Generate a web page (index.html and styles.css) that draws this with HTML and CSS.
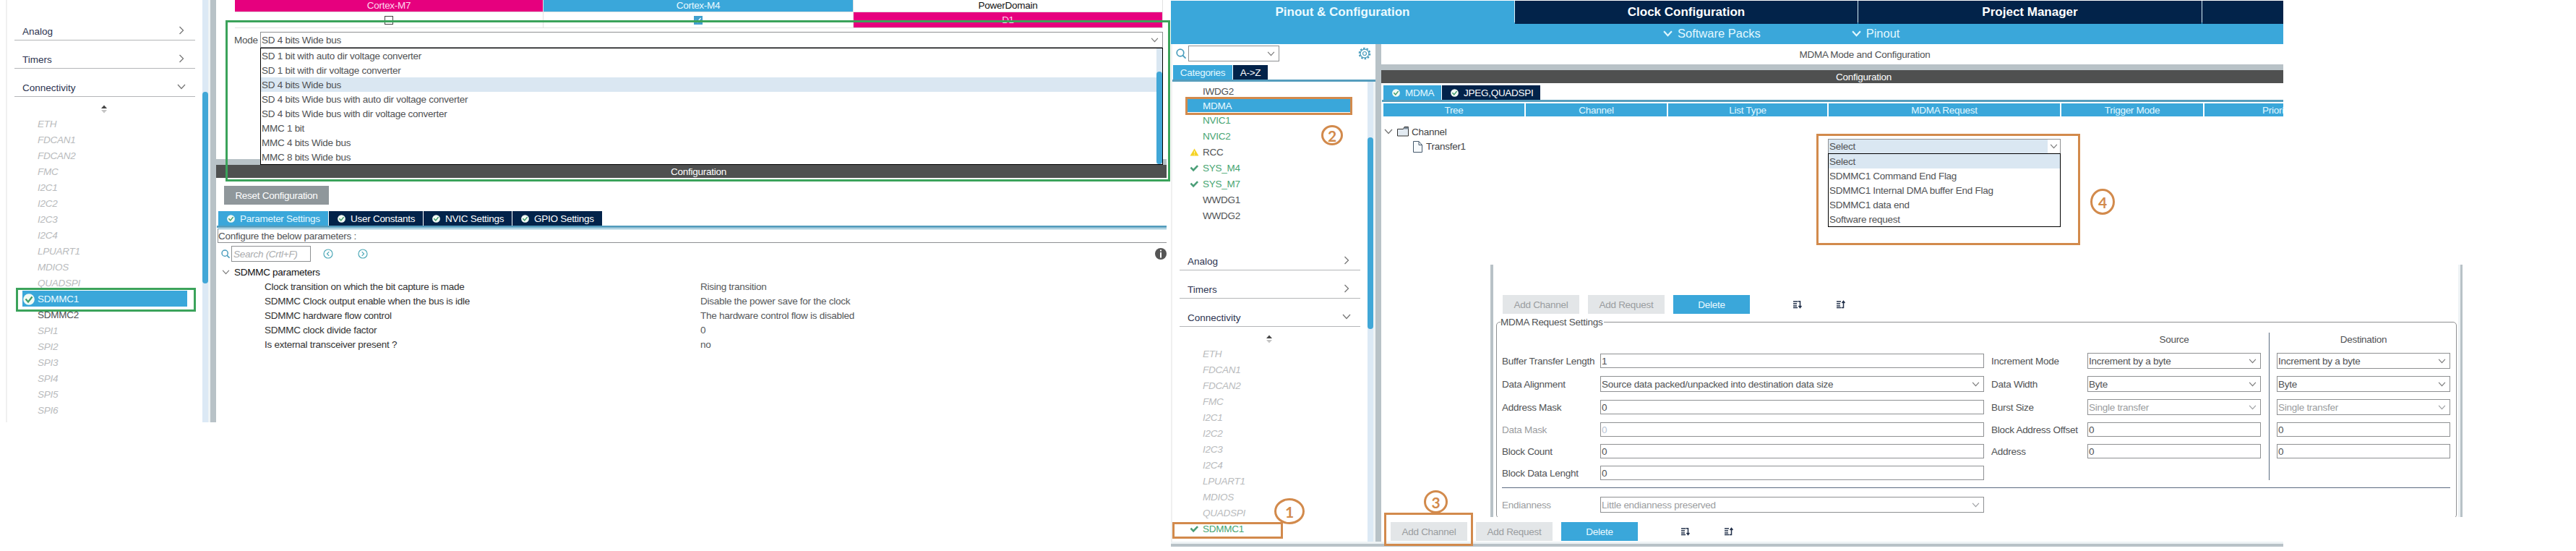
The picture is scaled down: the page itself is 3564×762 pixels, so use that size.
FILE: index.html
```html
<!DOCTYPE html>
<html lang="en">
<head>
  <meta charset="UTF-8" />
  <meta name="viewport" content="width=device-width, initial-scale=1.0"/>
  <title>SDMMC1 and MDMA configuration</title>
  <link rel="stylesheet" href="styles.css">
</head>
<body>
  <!-- shared icons -->
  <svg class="sprite">
    <symbol id="down" viewBox="0 0 12 8"><path d="M1 1l5 5.5L11 1" fill="none" stroke="currentColor" stroke-width="1.3"/></symbol>
    <symbol id="down-bold" viewBox="0 0 12 8"><path d="M1 1l5 5.5L11 1" fill="none" stroke="currentColor" stroke-width="2"/></symbol>
    <symbol id="right" viewBox="0 0 8 12"><path d="M1.5 1L6.500 6 1.500 11" fill="none" stroke="currentColor" stroke-width="1.3"/></symbol>
    <symbol id="sort" viewBox="0 0 8 12"><path d="M0 5l4-4.500L8 5z" fill="#444"/><path d="M0 7l4 4.500L8 7z" fill="#c4c4c4"/></symbol>
    <symbol id="ok" viewBox="0 0 16 16"><circle cx="8" cy="8" r="7.800" fill="#f1faf3"/><path d="M3.500 7.500L7 11.500l5.500-7" fill="none" stroke="#3f9c6b" stroke-width="2.200"/></symbol>
    <symbol id="tick" viewBox="0 0 14 12"><path d="M1.500 5L5.500 9.200l6.500-7" fill="none" stroke="#4a9e77" stroke-width="2.800"/></symbol>
    <symbol id="tick-thin" viewBox="0 0 8 8"><path d="M.5 4l2.500 2.500L7.500 1" fill="none" stroke="#fff" stroke-width="1.300"/></symbol>
    <symbol id="warn" viewBox="0 0 14 12"><path d="M7 .5L13.500 11.500H.5z" fill="#f5d327"/><path d="M7 4v4M7 9v1.400" stroke="#fff3b0" stroke-width="1.200"/></symbol>
    <symbol id="search" viewBox="0 0 14 14"><circle cx="6" cy="6" r="4.800" fill="none" stroke="#4a9dbd" stroke-width="1.700"/><path d="M9.300 9.500l4.200 4.200" stroke="#4a9dbd" stroke-width="1.800"/></symbol>
    <symbol id="gear" viewBox="0 0 18 18"><circle cx="9" cy="9" r="7.300" fill="none" stroke="#4a9dbd" stroke-width="2" stroke-dasharray="2.600 2"/><circle cx="9" cy="9" r="5.900" fill="none" stroke="#4a9dbd" stroke-width="1.200"/><circle cx="9" cy="9" r="2.500" fill="none" stroke="#4a9dbd" stroke-width="1.200"/></symbol>
    <symbol id="prev" viewBox="0 0 14 14"><circle cx="7" cy="7" r="6" fill="none" stroke="#4fa9b8" stroke-width="1.200"/><path d="M8.300 4.200L5.500 7l2.800 2.800" fill="none" stroke="#4fa9b8" stroke-width="1.200"/></symbol>
    <symbol id="next" viewBox="0 0 14 14"><circle cx="7" cy="7" r="6" fill="none" stroke="#4fa9b8" stroke-width="1.200"/><path d="M5.700 4.200L8.500 7 5.700 9.800" fill="none" stroke="#4fa9b8" stroke-width="1.200"/></symbol>
    <symbol id="info" viewBox="0 0 16 16"><circle cx="8" cy="8" r="8" fill="#555"/><path d="M8 2.500v2M8 6v7.500" stroke="#fff" stroke-width="2"/></symbol>
    <symbol id="folder" viewBox="0 0 16 14"><path d="M.5 3.500h8l1.500-3h5.500v12.500H.5z" fill="#e3ebf2" stroke="#333" /><path d="M9 3.500L10.500 1h5v2.500z" fill="#7d8b99"/></symbol>
    <symbol id="file" viewBox="0 0 13 16"><path d="M.5.5h7.500l4.500 5v10H.5z" fill="#f7fafc" stroke="#44586c"/><path d="M8 .5v5h4.500" fill="none" stroke="#44586c"/></symbol>
    <symbol id="movedown" viewBox="0 0 12 12"><path d="M0 2h6M0 5h5M0 8h5M0 10.500h6" stroke="#22304a" stroke-width="1.300"/><path d="M6.500 1.700h3V10M7.500 8l2 2.500 2-2.500" fill="none" stroke="#22304a" stroke-width="1.500"/></symbol>
    <symbol id="moveup" viewBox="0 0 12 12"><path d="M0 2h6M0 5h5M0 8h5M0 10.500h6" stroke="#22304a" stroke-width="1.300"/><path d="M6.500 10.500h3V2M7.500 4l2-2.500 2 2.500" fill="none" stroke="#22304a" stroke-width="1.500"/></symbol>
  </svg>

  <!-- SDMMC1 settings -->
  <div class="shot shot-sdmmc">
    <div class="nav">
      <div class="scroll">
        <div class="tree">
          <div class="group first">Analog<svg class="ic-right"><use href="#right"/></svg></div>
          <div class="group">Timers<svg class="ic-right"><use href="#right"/></svg></div>
          <div class="group">Connectivity<svg class="ic-down"><use href="#down"/></svg></div>
          <div class="sort"><svg><use href="#sort"/></svg></div>
          <div class="item off">ETH</div>
          <div class="item off">FDCAN1</div>
          <div class="item off">FDCAN2</div>
          <div class="item off">FMC</div>
          <div class="item off">I2C1</div>
          <div class="item off">I2C2</div>
          <div class="item off">I2C3</div>
          <div class="item off">I2C4</div>
          <div class="item off">LPUART1</div>
          <div class="item off">MDIOS</div>
          <div class="item off">QUADSPI</div>
          <div class="item selected"><svg class="ic-ok"><use href="#ok"/></svg>SDMMC1</div>
          <div class="item">SDMMC2</div>
          <div class="item off">SPI1</div>
          <div class="item off">SPI2</div>
          <div class="item off">SPI3</div>
          <div class="item off">SPI4</div>
          <div class="item off">SPI5</div>
          <div class="item off">SPI6</div>
        </div>
        <div class="track"><div class="thumb"></div></div>
      </div>
    </div>
    <div class="split"></div>
    <div class="main">
      <div class="mode-area">
        <div class="cores">
          <div class="pink">Cortex-M7</div>
          <div class="blue">Cortex-M4</div>
          <div class="domain">PowerDomain</div>
          <div><span class="check"></span></div>
          <div><span class="check on"><svg><use href="#tick-thin"/></svg></span></div>
          <div class="pink">D1</div>
        </div>
        <div class="mode">
          <label>Mode</label>
          <div class="combo">SD 4 bits Wide bus<svg><use href="#down"/></svg>
            <div class="menu">
              <div>SD 1 bit with auto dir voltage converter</div>
              <div>SD 1 bit with dir voltage converter</div>
              <div class="hover">SD 4 bits Wide bus</div>
              <div>SD 4 bits Wide bus with auto dir voltage converter</div>
              <div>SD 4 bits Wide bus with dir voltage converter</div>
              <div>MMC 1 bit</div>
              <div>MMC 4 bits Wide bus</div>
              <div>MMC 8 bits Wide bus</div>
              <div class="menu-track"><div class="menu-thumb"></div></div>
            </div>
          </div>
        </div>
      </div>
      <div class="divider"></div>
      <div class="title-bar">Configuration</div>
      <button class="reset">Reset Configuration</button>
      <div class="tabs">
        <div class="tab active param"><svg><use href="#ok"/></svg>Parameter Settings</div>
        <div class="tab user"><svg><use href="#ok"/></svg>User Constants</div>
        <div class="tab nvic"><svg><use href="#ok"/></svg>NVIC Settings</div>
        <div class="tab gpio"><svg><use href="#ok"/></svg>GPIO Settings</div>
      </div>
      <div class="hint">Configure the below parameters :</div>
      <div class="find">
        <svg class="ic-search"><use href="#search"/></svg>
        <div class="field">Search (Crtl+F)</div>
        <svg class="ic-round"><use href="#prev"/></svg>
        <svg class="ic-round"><use href="#next"/></svg>
        <svg class="ic-info"><use href="#info"/></svg>
      </div>
      <div class="params">
        <div class="params-title"><svg><use href="#down"/></svg>SDMMC parameters</div>
        <div class="param-row"><span>Clock transition on which the bit capture is made</span><span>Rising transition</span></div>
        <div class="param-row"><span>SDMMC Clock output enable when the bus is idle</span><span>Disable the power save for the clock</span></div>
        <div class="param-row"><span>SDMMC hardware flow control</span><span>The hardware control flow is disabled</span></div>
        <div class="param-row"><span>SDMMC clock divide factor</span><span>0</span></div>
        <div class="param-row"><span>Is external transceiver present ?</span><span>no</span></div>
      </div>
    </div>
    <div class="mark green mark-mode"></div>
    <div class="mark green mark-item"></div>
  </div>

  <!-- MDMA settings -->
  <div class="shot shot-mdma">
    <div class="top-tabs">
      <div class="active">Pinout &amp; Configuration</div>
      <div>Clock Configuration</div>
      <div>Project Manager</div>
      <div></div>
    </div>
    <div class="sub-bar">
      <span><svg><use href="#down-bold"/></svg>Software Packs</span>
      <span><svg><use href="#down-bold"/></svg>Pinout</span>
    </div>
    <div class="work">
      <div class="nav">
        <div class="nav-tools">
          <svg class="ic-search"><use href="#search"/></svg>
          <div class="combo"><svg><use href="#down"/></svg></div>
          <svg class="ic-gear"><use href="#gear"/></svg>
        </div>
        <div class="tabs">
          <div class="tab active cat">Categories</div>
          <div class="tab az">A-&gt;Z</div>
        </div>
        <div class="scroll">
          <div class="tree">
            <div class="item short">IWDG2</div>
            <div class="item short selected">MDMA</div>
            <div class="item green-text">NVIC1</div>
            <div class="item green-text">NVIC2</div>
            <div class="item"><svg class="ic-tick"><use href="#warn"/></svg>RCC</div>
            <div class="item green-text"><svg class="ic-tick"><use href="#tick"/></svg>SYS_M4</div>
            <div class="item green-text"><svg class="ic-tick"><use href="#tick"/></svg>SYS_M7</div>
            <div class="item">WWDG1</div>
            <div class="item">WWDG2</div>
            <div class="group first">Analog<svg class="ic-right"><use href="#right"/></svg></div>
            <div class="group">Timers<svg class="ic-right"><use href="#right"/></svg></div>
            <div class="group">Connectivity<svg class="ic-down"><use href="#down"/></svg></div>
            <div class="sort"><svg><use href="#sort"/></svg></div>
            <div class="item off">ETH</div>
            <div class="item off">FDCAN1</div>
            <div class="item off">FDCAN2</div>
            <div class="item off">FMC</div>
            <div class="item off">I2C1</div>
            <div class="item off">I2C2</div>
            <div class="item off">I2C3</div>
            <div class="item off">I2C4</div>
            <div class="item off">LPUART1</div>
            <div class="item off">MDIOS</div>
            <div class="item off">QUADSPI</div>
            <div class="item green-text"><svg class="ic-tick"><use href="#tick"/></svg>SDMMC1</div>
            <div class="item">SDMMC2</div>
          </div>
          <div class="track"><div class="thumb"></div></div>
        </div>
      </div>
      <div class="split"></div>
      <div class="main">
        <div class="page-title">MDMA Mode and Configuration</div>
        <div class="divider"></div>
        <div class="title-bar">Configuration</div>
        <div class="tabs">
          <div class="tab active mdma"><svg><use href="#ok"/></svg>MDMA</div>
          <div class="tab jpeg"><svg><use href="#ok"/></svg>JPEG,QUADSPI</div>
        </div>
        <div class="cols head">
          <div>Tree</div>
          <div>Channel</div>
          <div>List Type</div>
          <div>MDMA Request</div>
          <div>Trigger Mode</div>
          <div>Priority</div>
        </div>
        <div class="requests">
          <div class="channel"><svg class="ic-down"><use href="#down"/></svg><svg class="ic-folder"><use href="#folder"/></svg>Channel</div>
          <div class="cols">
            <div class="transfer"><svg><use href="#file"/></svg>Transfer1</div>
            <div class="combo request">Select<span class="arrow"><svg><use href="#down"/></svg></span>
              <div class="menu">
                <div class="hover">Select</div>
                <div>SDMMC1 Command End Flag</div>
                <div>SDMMC1 Internal DMA buffer End Flag</div>
                <div>SDMMC1 data end</div>
                <div>Software request</div>
              </div>
            </div>
          </div>
        </div>
        <div class="actions">
          <button class="disabled">Add Channel</button>
          <button class="disabled">Add Request</button>
          <button>Delete</button>
          <svg><use href="#movedown"/></svg>
          <svg><use href="#moveup"/></svg>
        </div>
      </div>
    </div>
    <div class="status"></div>
    <div class="mark orange mark-mdma"></div>
    <div class="mark orange mark-sdmmc"></div>
    <div class="mark orange mark-add"></div>
    <div class="mark orange mark-request"></div>
    <div class="step step1">1</div>
    <div class="step step2">2</div>
    <div class="step step3">3</div>
    <div class="step step4">4</div>
  </div>

  <!-- request settings, laid over the MDMA window -->
  <div class="settings">
    <div class="actions">
      <button class="disabled">Add Channel</button>
      <button class="disabled">Add Request</button>
      <button>Delete</button>
      <svg><use href="#movedown"/></svg>
      <svg><use href="#moveup"/></svg>
    </div>
    <fieldset>
      <legend>MDMA Request Settings</legend>
      <div class="form">
        <div class="vline"></div>
        <div class="src">Source</div>
        <div class="dst dst-title">Destination</div>

        <label>Buffer Transfer Length</label>
        <div class="input">1</div>
        <label class="second">Increment Mode</label>
        <div class="combo">Increment by a byte<svg><use href="#down"/></svg></div>
        <div class="combo dst">Increment by a byte<svg><use href="#down"/></svg></div>

        <label>Data Alignment</label>
        <div class="combo">Source data packed/unpacked into destination data size<svg><use href="#down"/></svg></div>
        <label class="second">Data Width</label>
        <div class="combo">Byte<svg><use href="#down"/></svg></div>
        <div class="combo dst">Byte<svg><use href="#down"/></svg></div>

        <label>Address Mask</label>
        <div class="input">0</div>
        <label class="second">Burst Size</label>
        <div class="combo gray">Single transfer<svg><use href="#down"/></svg></div>
        <div class="combo gray dst">Single transfer<svg><use href="#down"/></svg></div>

        <label class="gray">Data Mask</label>
        <div class="input faint">0</div>
        <label class="second">Block Address Offset</label>
        <div class="input">0</div>
        <div class="input dst">0</div>

        <label>Block Count</label>
        <div class="input">0</div>
        <label class="second">Address</label>
        <div class="input">0</div>
        <div class="input dst">0</div>

        <label>Block Data Lenght</label>
        <div class="input">0</div>
      </div>
      <div class="form last">
        <label class="gray">Endianness</label>
        <div class="combo gray">Little endianness preserved<svg><use href="#down"/></svg></div>
      </div>
    </fieldset>
  </div>
</body>
</html>
```
FILE: styles.css
```css
* {
  box-sizing: border-box;
}
body {
  position: relative;
  display: flex;
  align-items: flex-start;
  gap: 6px;
  width: 3564px;
  height: 762px;
  margin: 0;
  padding-left: 8px;
  overflow: hidden;
  background: #fff;
  color: #505254;
  font-family: "Liberation Sans", Arial, sans-serif;
  font-size: 13.5px;
  letter-spacing: -0.27px;
  line-height: 21px;
  white-space: nowrap;
}
svg {
  display: block;
  flex: none;
}
.sprite {
  position: absolute;
  width: 0;
  height: 0;
}
.shot {
  position: relative;
}
.shot-sdmmc {
  z-index: 1;
  display: flex;
  width: 1606px;
  height: 584px;
}
.shot-mdma {
  width: 1539px;
  height: 756px;
  padding-top: 1px;
  overflow: hidden;
}

/* left navigation */
.nav {
  display: flex;
  flex-direction: column;
  width: 283px;
  border-left: 2px solid #f0f0f0;
}
.shot-sdmmc .nav {
  height: 584px;
}
.scroll {
  display: flex;
  flex: 1;
  min-height: 0;
  padding-right: 3px;
  background: #eef3f5;
}
.tree {
  width: 270px;
  overflow: hidden;
  background: #fff;
}
.track {
  width: 8px;
  background: #dce9f5;
}
.thumb {
  height: 265px;
  margin-top: 127px;
  border-radius: 4px;
  background: #41a7d7;
}
.shot-mdma .thumb {
  margin-top: 77px;
}
.split {
  width: 8px;
  background: #b8c2c7;
}
.group {
  display: flex;
  align-items: center;
  justify-content: space-between;
  width: 250px;
  height: 39px;
  margin-left: 10px;
  padding: 15px 13px 0 11px;
  border-bottom: 1px solid #b4b6b8;
  color: #2c3350;
  letter-spacing: 0;
}
.group.first {
  margin-top: 17px;
}
.shot-mdma .group.first {
  margin-top: 26px;
}
.group svg {
  margin-bottom: 4px;
  color: #777;
}
.ic-right {
  width: 8px;
  height: 12px;
  margin-right: 2px;
}
.ic-down {
  width: 12px;
  height: 8px;
}
.sort {
  height: 26px;
  padding: 11px 0 0 130px;
}
.sort svg {
  width: 8px;
  height: 12px;
}
.item {
  display: flex;
  align-items: center;
  height: 22px;
  padding: 1px 0 0 42px;
}
.item.short {
  height: 20px;
}
.item.off {
  color: #b9bbbd;
  font-style: italic;
}
.item.selected {
  width: 228px;
  margin-left: 21px;
  padding-left: 21px;
  background: #3aa7da;
  color: #eafaff;
}
.item.short.selected {
  height: 19px;
  width: 225px;
}
.green-text {
  color: #48a572;
}
.ic-ok {
  width: 16px;
  height: 16px;
  margin: 0 4px 0 -20px;
}
.ic-tick {
  width: 13px;
  height: 11px;
  margin: 0 5px 0 -18px;
}

/* common pieces */
.main {
  flex: 1;
  min-width: 0;
  overflow: hidden;
}
.divider {
  height: 8px;
  background: #b8c2c7;
}
.title-bar {
  height: 18px;
  background: #4f5050;
  color: #fff;
  line-height: 19px;
  text-align: center;
}
.tabs {
  display: flex;
  gap: 1px;
  height: 23px;
  border-bottom: 3px solid #559dbd;
}
.tab {
  display: flex;
  align-items: center;
  height: 20px;
  padding-left: 12px;
  background: #02234a;
  color: #fff;
}
.tab.active {
  background: #3aa7da;
  color: #e2f8ff;
}
.tab svg {
  width: 11px;
  height: 11px;
  margin-right: 7px;
}
.combo,
.input {
  position: relative;
  display: flex;
  align-items: center;
  justify-content: space-between;
  height: 22px;
  padding: 0 5px 0 1px;
  border: 1px solid #8e9092;
  background: #fff;
}
.input {
  height: 20px;
}
.combo svg {
  width: 11px;
  height: 7px;
  color: #777;
}
.menu {
  position: absolute;
  top: 21px;
  left: -1px;
  right: -1px;
  border: 1px solid #000;
  background: #fff;
}
.menu > div {
  height: 20px;
  padding-left: 1px;
}
.menu .hover {
  background: #dae7f2;
}
.menu > .menu-track {
  position: absolute;
  top: 0;
  right: 0;
  bottom: 0;
  width: 8px;
  height: auto;
  padding: 32px 0 0;
  background: #dae7f2;
}
.menu-thumb {
  height: 128px;
  border-radius: 4px;
  background: #41a7d7;
}
button {
  height: 26px;
  padding: 0;
  border: none;
  background: #3aa7da;
  color: #eafaff;
  font: inherit;
  letter-spacing: inherit;
}
.disabled {
  background: #e3e6e8;
  color: #9a9da0;
}

/* SDMMC window */
.mode-area {
  height: 220px;
  padding: 0 5px 0 26px;
}
.cores {
  display: grid;
  grid-template-columns: 426px 428px 427px;
  grid-template-rows: 16px 21px;
  gap: 1px;
  width: 1284px;
  border: solid #e2e2e2;
  border-width: 0 1px 1px 0;
  background: #e2e2e2;
  text-align: center;
  line-height: 16px;
}
.cores > div {
  display: flex;
  align-items: center;
  justify-content: center;
  background: #fff;
}
.cores > .pink {
  background: #e6007e;
  color: #ffd9ee;
}
.cores > .blue {
  background: #3aa7da;
  color: #eafaff;
}
.cores > .domain {
  color: #111;
}
.check {
  width: 12px;
  height: 12px;
  border: 1px solid #444;
}
.check.on {
  border: none;
  background: #41a0cd;
}
.check svg {
  width: 8px;
  height: 8px;
  margin: 2px;
}
.mode {
  display: flex;
  align-items: center;
  margin: 5px 0 0 -1px;
}
.mode label {
  width: 36px;
}
.mode .combo {
  width: 1249px;
}
.shot-sdmmc .title-bar {
  padding-left: 20px;
}
.reset {
  display: block;
  width: 145px;
  margin: 11px 0 9px 11px;
  background: #8f979b;
  color: #fff;
}
.shot-sdmmc .tabs {
  margin-left: 1px;
  padding-left: 2px;
}
.param { width: 152px; }
.user { width: 130px; }
.nvic { width: 122px; }
.gpio { width: 124px; }
.hint {
  height: 20px;
  margin: 1px 0 0 2px;
  border: 1px solid #8e9092;
  border-width: 1px 0 1px 1px;
  border-top-color: #5aa5c4;
  line-height: 19px;
}
.find {
  display: flex;
  align-items: center;
  height: 22px;
  margin-top: 4px;
  padding-left: 7px;
}
.ic-search {
  width: 12px;
  height: 12px;
}
.find .field {
  width: 110px;
  height: 22px;
  margin-left: 2px;
  padding-left: 2px;
  border: 1px solid #8e9092;
  color: #a9abad;
  font-style: italic;
}
.ic-round {
  width: 14px;
  height: 14px;
  margin-left: 17px;
}
.ic-round + .ic-round {
  margin-left: 34px;
}
.ic-info {
  width: 16px;
  height: 16px;
  margin-left: auto;
}
.params {
  padding-top: 4px;
}
.params-title {
  display: flex;
  align-items: center;
  height: 20px;
  color: #111;
}
.params-title svg {
  width: 11px;
  height: 7px;
  margin: 0 6px 0 8px;
  color: #777;
}
.param-row {
  display: grid;
  grid-template-columns: 603px 1fr;
  height: 20px;
  padding-left: 67px;
  color: #333;
}
.param-row span + span {
  color: #55585a;
}

/* MDMA window */
.top-tabs {
  display: grid;
  grid-template-columns: 475px 474px 475px 475px;
  gap: 1px;
  height: 30px;
  background: #d8edf6;
  color: #fff;
  font-size: 17px;
  font-weight: bold;
  letter-spacing: 0;
  line-height: 32px;
  text-align: center;
}
.top-tabs div {
  background: #02234a;
}
.top-tabs .active {
  background: #3aa7da;
  color: #eafaff;
}
.sub-bar {
  display: flex;
  gap: 126px;
  height: 30px;
  padding-left: 681px;
  background: #3aa7da;
  color: #e2f8ff;
  font-size: 16.5px;
  letter-spacing: 0;
  line-height: 32px;
}
.sub-bar span {
  display: flex;
  align-items: center;
}
.sub-bar svg {
  width: 13px;
  height: 9px;
  margin-right: 7px;
}
.work {
  display: flex;
  height: 688px;
}
.nav-tools {
  display: flex;
  align-items: center;
  height: 29px;
  padding: 0 6px 4px 5px;
}
.nav-tools .ic-search {
  width: 14px;
  height: 14px;
}
.nav-tools .combo {
  justify-content: flex-end;
  width: 126px;
  margin: 1px auto 0 3px;
}
.ic-gear {
  width: 18px;
  height: 18px;
}
.nav .tabs {
  padding-left: 1px;
}
.nav .tab {
  padding: 0;
  justify-content: center;
}
.cat { width: 82px; }
.az { width: 48px; }
.shot-mdma .tree {
  padding-top: 3px;
}
.shot-mdma .main {
  display: flex;
  flex-direction: column;
}
.page-title {
  width: 1338px;
  height: 28px;
  line-height: 30px;
  text-align: center;
}
.shot-mdma .title-bar {
  width: 1335px;
}
.main .mdma { width: 80px; }
.main .jpeg { width: 136px; }
.shot-mdma .main .tabs {
  margin: 3px 0 2px 1px;
  padding-left: 2px;
}
.cols {
  display: grid;
  grid-template-columns: 195px 195px 220px 320px 196px 200px;
  gap: 2px;
  margin-left: 3px;
}
.head {
  color: #e2f8ff;
  line-height: 20px;
  text-align: center;
}
.head div {
  height: 18px;
  background: #3aa7da;
}
.requests {
  flex: 1;
  padding-top: 11px;
  color: #404244;
}
.channel {
  display: flex;
  align-items: center;
  height: 20px;
  padding-left: 4px;
}
.channel .ic-down {
  color: #777;
}
.ic-folder {
  width: 16px;
  height: 14px;
  margin: 0 4px 0 6px;
}
.transfer {
  display: flex;
  align-items: center;
  padding-left: 41px;
}
.transfer svg {
  width: 13px;
  height: 16px;
  margin-right: 5px;
}
.request {
  grid-column: 4;
  height: 21px;
  margin: 0 -1px;
  padding-right: 0;
  background: #dae7f2;
  color: #505254;
}
.request .menu {
  top: 19px;
}
.arrow {
  padding: 6px 3px;
  background: #fff;
}
.actions {
  display: flex;
  align-items: center;
  gap: 12px;
}
.actions button {
  width: 106px;
}
.actions svg {
  width: 12px;
  height: 12px;
  margin-left: 36px;
}
.actions button + svg {
  margin-left: 48px;
}
.main .actions {
  padding: 0 0 1px 13px;
}
.status {
  height: 8px;
  border-top: 3px solid #eef3f5;
  background: #b8c2c7;
}

/* request settings panel */
.settings {
  position: absolute;
  top: 366px;
  left: 2062px;
  width: 1345px;
  height: 349px;
  padding-top: 42px;
  overflow: hidden;
  border: solid #b8c2c7;
  border-width: 0 3px 0 4px;
  background: #fff;
  box-shadow: inset -3px 0 #eef3f5;
}
.settings .actions {
  padding-left: 13px;
}
fieldset {
  width: 1329px;
  height: 282px;
  margin: 1px 0 0 4px;
  padding: 0 7px;
  border: 1px solid #8e9092;
  border-radius: 5px;
}
legend {
  height: 20px;
  margin-left: -2px;
  padding: 0 2px 0 0;
}
.form {
  display: grid;
  grid-template-columns: 136px 531px 10px 133px 240px 22px 240px;
  grid-template-rows: 28px repeat(3, 32px) repeat(3, 30px);
  align-items: center;
  width: 1312px;
}
.form > label {
  grid-column: 1;
}
.form > .second {
  grid-column: 4;
}
.vline {
  grid-column: 6;
  grid-row: 1 / 8;
  align-self: stretch;
  justify-self: center;
  width: 1px;
  margin: 5px 0;
  background: #5b6b80;
}
.src {
  grid-column: 5;
  grid-row: 1;
  text-align: center;
}
.form > .dst {
  grid-column: 7;
}
.dst-title {
  text-align: center;
}
.form.last {
  grid-template-rows: 46px;
  margin-top: 5px;
  border-top: 1px solid #5b6b80;
}
.gray,
.gray svg {
  color: #9b9da0;
}
.faint {
  color: #b9c4d4;
}

/* annotations */
.mark {
  position: absolute;
  border: 3px solid;
}
.green {
  border-color: #3ba35b;
}
.orange {
  border-color: #d28a4c;
}
.mark-mode {
  top: 28px;
  left: 304px;
  width: 1307px;
  height: 223px;
}
.mark-item {
  top: 398px;
  left: 14px;
  width: 249px;
  height: 33px;
}
.mark-mdma {
  top: 134px;
  left: 20px;
  width: 231px;
  height: 25px;
}
.mark-sdmmc {
  top: 722px;
  left: 2px;
  width: 153px;
  height: 23px;
}
.mark-add {
  top: 709px;
  left: 295px;
  width: 123px;
  height: 46px;
}
.mark-request {
  top: 185px;
  left: 893px;
  width: 365px;
  height: 154px;
}
.step {
  position: absolute;
  display: flex;
  align-items: center;
  justify-content: center;
  border: 3px solid #d28a4c;
  border-radius: 50%;
  color: #d28a4c;
  font-family: Lato, sans-serif;
  font-size: 21px;
  font-weight: bold;
}
.step1 {
  top: 689px;
  left: 143px;
  width: 42px;
  height: 36px;
}
.step2 {
  top: 173px;
  left: 208px;
  width: 30px;
  height: 28px;
}
.step3 {
  top: 678px;
  left: 350px;
  width: 33px;
  height: 32px;
}
.step4 {
  top: 261px;
  left: 1272px;
  width: 34px;
  height: 36px;
}
```
